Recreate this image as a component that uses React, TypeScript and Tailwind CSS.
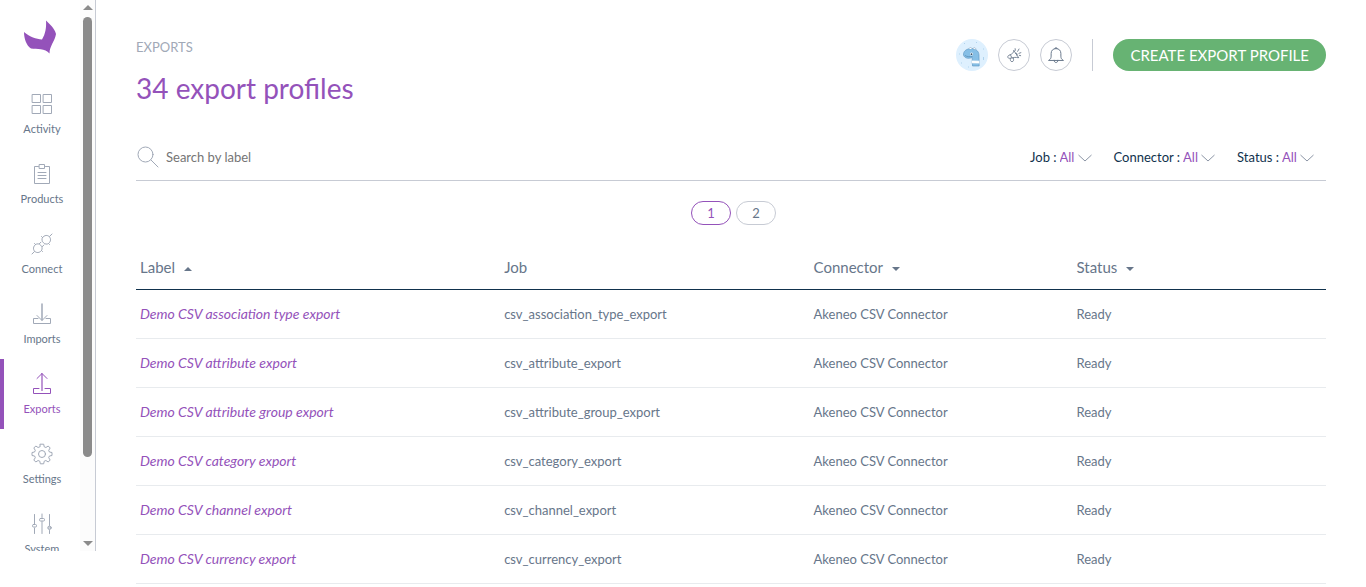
import React, { useState } from 'react';

interface IconProps {
    className?: string;
}

interface NavEntry {
    label: string;
    icon: React.FC<IconProps>;
}

interface ExportProfile {
    label: string;
    job: string;
    connector: string;
    status: string;
}

const Icon: React.FC<IconProps & { children: React.ReactNode }> = ({ className = 'size-6', children }) => (
    <svg viewBox="0 0 24 24" className={className} fill="none" stroke="currentColor" strokeLinecap="round" strokeLinejoin="round" aria-hidden="true">
        {children}
    </svg>
);

const ActivityIcon: React.FC<IconProps> = props => (
    <Icon {...props}>
        <path d="M2.5 2.5h8v8h-8zM13.5 2.5h8v8h-8zM2.5 13.5h8v8h-8zM13.5 13.5h8v8h-8z" />
    </Icon>
);

const ProductsIcon: React.FC<IconProps> = props => (
    <Icon {...props}>
        <path d="M8.500 4.500h-4v17h15v-17h-4M9.500 2.500h5v4h-5zM8 10.500h8M8 13.500h8M8 16.500h8" />
    </Icon>
);

const ConnectIcon: React.FC<IconProps> = props => (
    <Icon {...props}>
        <path d="M12.500 5.500c2-2.500 5-2.700 6.800-.8s1.700 4.800-.8 6.800c-1.500 1-3.500.8-5-.7s-2.200-3.600-1-5.300zM19.500 4.500L22 2" />
        <path d="M5.500 12.500c2-1.200 3.700-.8 5.200.7s1.900 3.400.8 5.300c-2 2.500-5 2.600-6.800.8s-1.700-4.800.8-6.800zM4.500 19.500L2 22" />
        <path d="M9.300 11.800l1.700-1.700M12.200 14.700l1.700-1.700M11.500 4.500l1 1M18.500 11.500l1 1M4.500 11.500l1 1M11.500 18.500l1 1" />
    </Icon>
);

const ImportsIcon: React.FC<IconProps> = props => (
    <Icon {...props}>
        <path d="M8 16.500H3.500v5h17v-5H16M7 13.500l5 5 5-5" />
        <path d="M12 2v16" strokeWidth="1.500" />
    </Icon>
);

const ExportsIcon: React.FC<IconProps> = props => (
    <Icon {...props}>
        <path d="M9 16.500H3.500v5h17v-5H15M7 6.500l5-5 5 5" />
        <path d="M12 18.500v-17" strokeWidth="1.200" />
    </Icon>
);

const SettingsIcon: React.FC<IconProps> = props => (
    <Icon {...props}>
        <circle cx="12" cy="12" r="3.500" />
        <path d="M10.300 2.200h3.400l.5 2.600 1.700.7 2.300-1.500 2 2-1.500 2.300.7 1.700 2.600.5v3l-2.600.5-.7 1.700 1.500 2.300-2 2-2.300-1.500-1.700.7-.5 2.600h-3.400l-.5-2.600-1.700-.7L5.800 20l-2-2 1.500-2.300-.7-1.700-2.600-.5v-3l2.600-.5.7-1.700L3.800 6l2-2 2.300 1.500 1.700-.7z" />
    </Icon>
);

const SystemIcon: React.FC<IconProps> = props => (
    <Icon {...props}>
        <path d="M4.500 2.500v10M4.500 16v5.500M12 2v3.500M12 9.500v12M19.500 2.500v11M19.500 18.500v3" />
        <rect x="2.500" y="12.500" width="4" height="2.500" rx="1" />
        <rect x="9.500" y="6.500" width="5" height="2.500" rx="1" />
        <circle cx="19.500" cy="15.800" r="1.700" fill="currentColor" fillOpacity=".5" />
    </Icon>
);

const SearchIcon: React.FC<IconProps> = props => (
    <Icon {...props}>
        <circle cx="9.500" cy="9.500" r="7.500" />
        <path d="M15 15l7 7" />
    </Icon>
);

const BellIcon: React.FC<IconProps> = props => (
    <Icon {...props}>
        <path d="M2.500 19c2-1.300 3-2.500 3-5.500v-3.500c0-4 2.500-6.500 6.500-6.500s6.500 2.500 6.500 6.500v3.500c0 3 1 4.200 3 5.500zM9.500 19c0 2 1 3 2.500 3s2.500-1 2.500-3M10.500 3.500c0-2 3-2 3 0" strokeWidth="1.300" />
    </Icon>
);

const MegaphoneIcon: React.FC<IconProps> = props => (
    <Icon {...props}>
        <path d="M11.500 5l7.500 11M12 6c-1 3-3 4.500-5.500 5.500l-3 1.500c-1.500 1-1 4.500 2 4l3-.5c3-.8 6-1.500 9.500-.5M6.500 11.500l2.500 5M6.500 17.500c-.5 2 .5 4.500 2.500 4.500s3-2 2-5.500M14.500 9.500c1.800-.8 3.200 1.200 2 2.700M14 5l-.3-2.500M17.500 6.500L19.500 3M19.500 9.500l2.800-1M20 12.500l2 .5" strokeWidth="1.300" />
    </Icon>
);

const ChevronIcon: React.FC<IconProps> = ({ className }) => (
    <svg viewBox="0 0 14 8" className={className} fill="none" stroke="currentColor" aria-hidden="true">
        <path d="M.5 1L7 7l6.500-6" />
    </svg>
);

const Logo = () => (
    <svg viewBox="0 0 34 34" className="h-[34px] w-[34px] text-[#9452ba]" fill="currentColor" role="img" aria-label="Akeneo">
        <path d="M1 12c6 5 12 7 18 7.500C22.500 14 23.500 7 23 .5 27 4.500 31.500 8 33 14c-1 7-6.500 12-6.500 19.500C22 28 14 29.500 8 28.500 3.500 25.500 1 19 1 12z" />
    </svg>
);

const Avatar = () => (
    <svg viewBox="0 0 32 32" className="size-8" aria-hidden="true">
        <circle cx="16" cy="16" r="16" fill="#def0fe" />
        <path d="M7.500 16c-.3-3.500 2.500-6 6.500-6.300 5-.7 8.800 2 9 6.300l.2 11h-6.700l-.3-8.500c-3.500 1.500-7.700 1-8.700-2.500z" fill="#86bfe6" stroke="#5992bd" strokeWidth=".6" />
        <path d="M13 10c0-2 3-2 3 0M17 9.800c.5-1.800 3-1.300 2.700.6" fill="#fff" stroke="#8aa5bd" strokeWidth=".6" />
        <path d="M15.500 21.500l8 .3v2.800l-8-.3z" fill="#fff" stroke="#a9c9e2" strokeWidth=".4" />
        <circle cx="15.500" cy="15" r="1.500" fill="#fff" />
        <circle cx="15.500" cy="15.200" r=".9" fill="#34506b" />
        <path d="M9 16.500c2 1.300 5 1.500 7.500.8" fill="none" stroke="#4d7fa8" strokeWidth=".6" />
        <path d="M8 4.500h1M20 3.500h1M27 10h1M3 15h1M5 24h1M12 28h1M27.500 18v3" stroke="#a5cbe8" strokeWidth=".8" />
    </svg>
);

const navEntries: NavEntry[] = [
    { label: 'Activity', icon: ActivityIcon },
    { label: 'Products', icon: ProductsIcon },
    { label: 'Connect', icon: ConnectIcon },
    { label: 'Imports', icon: ImportsIcon },
    { label: 'Exports', icon: ExportsIcon },
    { label: 'Settings', icon: SettingsIcon },
    { label: 'System', icon: SystemIcon },
];

const filters = ['Job', 'Connector', 'Status'];

const profiles: ExportProfile[] = [
    { label: 'Demo CSV association type export', job: 'csv_association_type_export', connector: 'Akeneo CSV Connector', status: 'Ready' },
    { label: 'Demo CSV attribute export', job: 'csv_attribute_export', connector: 'Akeneo CSV Connector', status: 'Ready' },
    { label: 'Demo CSV attribute group export', job: 'csv_attribute_group_export', connector: 'Akeneo CSV Connector', status: 'Ready' },
    { label: 'Demo CSV category export', job: 'csv_category_export', connector: 'Akeneo CSV Connector', status: 'Ready' },
    { label: 'Demo CSV channel export', job: 'csv_channel_export', connector: 'Akeneo CSV Connector', status: 'Ready' },
    { label: 'Demo CSV currency export', job: 'csv_currency_export', connector: 'Akeneo CSV Connector', status: 'Ready' },
];

const columns = [
    { name: 'Label', width: 'w-[30.6%]', sort: 'asc' },
    { name: 'Job', width: 'w-[26%]', sort: null },
    { name: 'Connector', width: 'w-[22.1%]', sort: 'desc' },
    { name: 'Status', width: 'w-[21.3%]', sort: 'desc' },
];

const cellStyle = 'h-[49px] border-b border-[#e8ebee] pl-1';

const SortArrow = ({ direction }: { direction: string }) => (
    <svg viewBox="0 0 8 4" className="mt-0.5 h-1 w-2" fill="currentColor" aria-hidden="true">
        <path d={direction === 'asc' ? 'M0 4l4-4 4 4z' : 'M0 0l4 4 4-4z'} />
    </svg>
);

const Sidebar = () => (
    <div className="flex h-[calc(100vh-36px)] shrink-0 border-r border-[#c7cbd4]">
        <nav className="flex w-20 flex-col overflow-hidden" aria-label="Main">
            <a href="#home" className="flex h-[79px] shrink-0 justify-center pt-5">
                <Logo />
            </a>
            {navEntries.map(({ label, icon: NavIcon }) => {
                const isActive = label === 'Exports';
                return (
                    <a
                        key={label}
                        href={`#${label.toLowerCase()}`}
                        aria-current={isActive ? 'page' : undefined}
                        className={`flex h-[70px] w-20 shrink-0 flex-col items-center border-l-4 pt-[13px] text-[11px] leading-4 ${
                            isActive ? 'border-[#9452ba] text-[#9452ba]' : 'border-transparent text-[#67768a]'
                        }`}
                    >
                        <NavIcon className={`mb-[5px] size-6 shrink-0 ${isActive ? 'text-[#9452ba]' : 'text-[#a1a9b7]'}`} />
                        {label}
                    </a>
                );
            })}
        </nav>
        {/* Scroll track */}
        <div className="flex w-[15px] flex-col items-center bg-[#fcfcfc] py-1" aria-hidden="true">
            <svg viewBox="0 0 10 6" className="mb-1 h-[6px] w-[10px] shrink-0" fill="#8b8b8b"><path d="M0 6l5-5 5 5z" /></svg>
            <div className="mt-[3px] flex min-h-0 w-full flex-1 justify-center">
                <div className="h-[84%] w-[9px] rounded-full bg-[#8b8b8b]" />
            </div>
            <svg viewBox="0 0 10 6" className="h-[6px] w-[10px] shrink-0" fill="#8b8b8b"><path d="M0 0l5 5 5-5z" /></svg>
        </div>
    </div>
);

const App: React.FC = () => {
    const [search, setSearch] = useState('');
    const [page, setPage] = useState(1);

    return (
        <div className="flex h-screen overflow-hidden bg-white font-['Lato',sans-serif] text-[13px] text-[#67768a]">
            <Sidebar />
            <main className="min-w-0 flex-1 px-10 pt-[39px]">
                <header className="flex items-start justify-between">
                    <div>
                        <div className="leading-4 text-[#a1a9b7]">EXPORTS</div>
                        <h1 className="mt-[15px] text-[28px] leading-9 text-[#9452ba]">34 export profiles</h1>
                    </div>
                    <div className="flex items-center">
                        <button className="rounded-full" aria-label="User menu">
                            <Avatar />
                        </button>
                        <button className="ml-[10px] flex size-8 items-center justify-center rounded-full border border-[#c7cbd4]" aria-label="Announcements">
                            <MegaphoneIcon className="size-4" />
                        </button>
                        <button className="ml-[10px] flex size-8 items-center justify-center rounded-full border border-[#c7cbd4]" aria-label="Notifications">
                            <BellIcon className="size-[18px]" />
                        </button>
                        <div className="mx-5 h-8 w-px bg-[#c7cbd4]" />
                        <button className="h-8 rounded-full bg-[#67b373] px-[17px] text-[15px] text-white">CREATE EXPORT PROFILE</button>
                    </div>
                </header>

                <div className="mt-7 flex h-[47px] items-center border-b border-[#c7cbd4]">
                    <SearchIcon className="mr-[6px] size-6 text-[#a1a9b7]" />
                    <input
                        type="text"
                        aria-label="Search by label"
                        className="min-w-0 flex-1 pt-0.5 outline-none placeholder:text-[#757575]"
                        placeholder="Search by label"
                        value={search}
                        onChange={e => setSearch(e.target.value)}
                    />
                    <div className="flex gap-[22px] pt-0.5 pr-3">
                        {filters.map(name => (
                            <div key={name} className="relative flex items-center">
                                <label htmlFor={`filter-${name}`} className="mr-[3px] text-[#11324d]">{name} :</label>
                                <select id={`filter-${name}`} className="w-8 appearance-none text-[#9452ba] outline-none">
                                    <option>All</option>
                                </select>
                                <ChevronIcon className="pointer-events-none absolute right-0 h-2 w-[14px] text-[#8b95a5]" />
                            </div>
                        ))}
                    </div>
                </div>

                <div className="mt-5 flex justify-center">
                    {[1, 2].map(n => (
                        <button
                            key={n}
                            onClick={() => setPage(n)}
                            className={`ml-[5px] h-6 w-10 rounded-full border pt-0.5 ${page === n ? 'border-[#9452ba] text-[#9452ba]' : 'border-[#c7cbd4]'}`}
                        >
                            {n}
                        </button>
                    ))}
                </div>

                <table className="mt-[21px] w-full table-fixed border-separate border-spacing-0 text-left">
                    <thead>
                        <tr>
                            {columns.map(col => (
                                <th key={col.name} scope="col" className={`h-11 border-b border-[#11324d] pl-1 text-[15px] font-normal ${col.width}`}>
                                    {col.sort ? (
                                        <button className="flex items-center gap-[9px]">
                                            {col.name}
                                            <SortArrow direction={col.sort} />
                                        </button>
                                    ) : col.name}
                                </th>
                            ))}
                        </tr>
                    </thead>
                    <tbody>
                        {profiles.map(profile => (
                            <tr key={profile.job}>
                                <td className={`${cellStyle} text-[14px] leading-5 text-[#9452ba] italic`}>{profile.label}</td>
                                <td className={`${cellStyle} pt-0.5`}>{profile.job}</td>
                                <td className={`${cellStyle} pt-0.5`}>{profile.connector}</td>
                                <td className={`${cellStyle} pt-0.5`}>{profile.status}</td>
                            </tr>
                        ))}
                    </tbody>
                </table>
            </main>
        </div>
    );
};

export default App;
